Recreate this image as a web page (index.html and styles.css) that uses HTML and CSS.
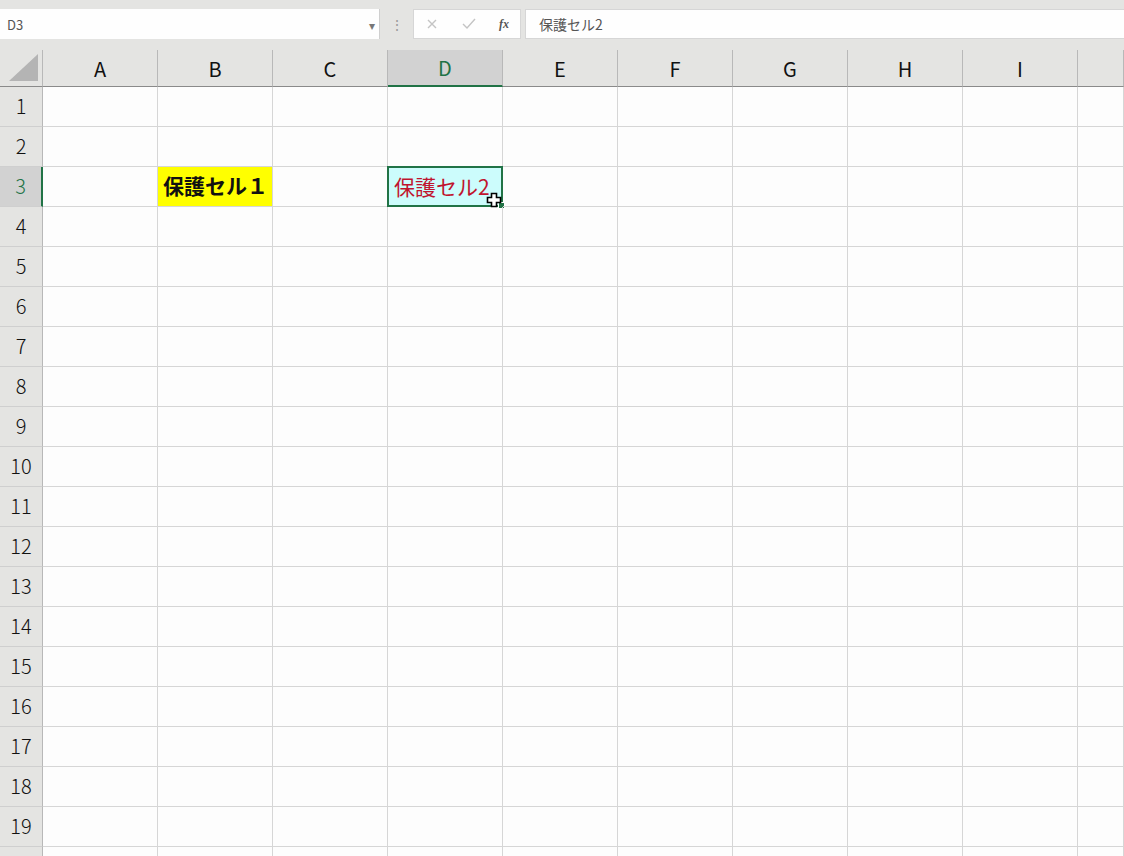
FILE: index.html
```html
<!DOCTYPE html>
<html lang="ja">
<head>
  <meta charset="UTF-8">
  <meta name="viewport" content="width=device-width, initial-scale=1.0">
  <title>Book1 - Sheet1</title>
  <link rel="stylesheet" href="styles.css">
</head>
<body>
  <div class="formula-bar">
    <div class="name-box">
      <span>D3</span>
      <span class="drop">&#9662;</span>
    </div>
    <div class="grip">&#8942;</div>
    <div class="fx-buttons">
      <svg class="fx-btn" width="14" height="14" viewBox="0 0 14 14"><path d="M3 3l8 8M11 3l-8 8" stroke="#c4c4c4" stroke-width="1.4" fill="none"/></svg>
      <svg class="fx-btn" width="16" height="14" viewBox="0 0 16 14"><path d="M2 7l4 4 8-9" stroke="#c4c4c4" stroke-width="1.4" fill="none"/></svg>
      <span class="fx">fx</span>
    </div>
    <div class="formula-input">保護セル2</div>
  </div>

  <div class="sheet" id="sheet"></div>

  <script>
    // build the grid: corner, column headers, then the rows
    const cols = ["A", "B", "C", "D", "E", "F", "G", "H", "I", ""];
    const sheet = document.getElementById("sheet");

    function cell(cls, text) {
      const el = document.createElement("div");
      el.className = cls;
      if (text) el.textContent = text;
      sheet.appendChild(el);
      return el;
    }

    const corner = cell("corner");
    corner.innerHTML = '<svg width="30" height="28" viewBox="0 0 30 28"><path d="M29 0V27H0Z" fill="#b4b4b4"/></svg>';
    cols.forEach(c => cell("col-head" + (c === "D" ? " active" : ""), c));

    for (let r = 1; r <= 20; r++) {
      // last row only peeks in under the window edge, its number stays hidden
      cell("row-head" + (r === 3 ? " active" : ""), r < 20 ? String(r) : "");
      cols.forEach(c => {
        const el = cell("cell");
        if (r === 3 && c === "B") {
          el.classList.add("locked");
          el.textContent = "保護セル１";
        }
        if (r === 3 && c === "D") {
          el.classList.add("selected");
          el.innerHTML = '保護セル2<span class="handle"></span>' +
            '<svg class="pointer" width="16" height="16" viewBox="0 0 16 16"><path d="M5.5 1.5h5v4h4v5h-4v4h-5v-4h-4v-5h4z" fill="#fff" stroke="#000" stroke-width="1.6"/></svg>';
        }
      });
    }
  </script>
</body>
</html>
```

FILE: styles.css
```css
body {
  margin: 0;
  background: #fdfdfd;
  font-family: "Noto Sans CJK JP", "Noto Sans", sans-serif;
  color: #222;
  overflow: hidden;
  width: 1124px;
  height: 856px;
}

/* top bar with name box and formula input */
.formula-bar {
  display: flex;
  align-items: flex-start;
  height: 50px;
  padding-top: 9px;
  box-sizing: border-box;
  background: #e4e4e2;
}
.name-box {
  width: 380px;
  height: 30px;
  background: #fefefe;
  border-right: 1px solid #cfcfcf;
  box-sizing: border-box;
  display: flex;
  align-items: center;
  justify-content: space-between;
  padding: 0 4px 0 7px;
  font-size: 13px;
  color: #555;
}
.name-box .drop {
  font-size: 12px;
  color: #777;
}
.grip {
  width: 33px;
  line-height: 30px;
  text-align: center;
  color: #9a9a9a;
  font-size: 14px;
}
.fx-buttons {
  width: 108px;
  height: 30px;
  background: #fefefe;
  border: 1px solid #d6d6d6;
  box-sizing: border-box;
  display: flex;
  align-items: center;
  justify-content: space-between;
  padding: 0 11px 0 11px;
}
.fx {
  font-family: "Liberation Serif", serif;
  font-style: italic;
  font-weight: bold;
  font-size: 12px;
  color: #555;
}
.formula-input {
  flex: 1;
  height: 30px;
  margin-left: 4px;
  background: #fefefe;
  border: 1px solid #d6d6d6;
  border-right: none;
  box-sizing: border-box;
  padding-left: 13px;
  line-height: 28px;
  font-size: 14px;
  color: #555;
}

/* spreadsheet grid */
.sheet {
  display: grid;
  grid-template-columns: 43px repeat(9, 115px) 46px;
  grid-template-rows: 37px;
  grid-auto-rows: 40px;
}
.corner {
  background: #e4e4e2;
  border-right: 1px solid #b8b8b8;
  border-bottom: 1px solid #8a8a8a;
  display: flex;
  align-items: flex-end;
  justify-content: flex-end;
  padding: 0 3px 4px 0;
}
.col-head {
  background: #e4e4e2;
  border-bottom: 1px solid #8a8a8a;
  border-right: 1px solid #b8b8b8;
  display: flex;
  align-items: center;
  justify-content: center;
  font-size: 20px;
  color: #111;
}
.col-head.active {
  background: #d2d2d2;
  color: #217346;
  border-bottom: 2px solid #217346;
}
.row-head {
  background: #e4e4e2;
  border-right: 1px solid #b8b8b8;
  border-bottom: 1px solid #cfcfcf;
  display: flex;
  align-items: center;
  justify-content: center;
  font-size: 20px;
  font-weight: 300;
  color: #111;
  padding-bottom: 2px;
}
.row-head.active {
  background: #d2d2d2;
  color: #217346;
  border-right: 2px solid #217346;
}
.cell {
  border-right: 1px solid #d6d6d6;
  border-bottom: 1px solid #d6d6d6;
  font-size: 21px;
  line-height: 37px;
  white-space: nowrap;
  position: relative;
}
.cell.locked {
  background: #ffff00;
  font-weight: bold;
  padding-left: 5px;
  color: #111;
}
.cell.selected {
  background: #ccfcfc;
  color: #c0142e;
  border: 2px solid #217346;
  margin: -1px 0 0 -1px;
  padding-left: 5px;
  line-height: 36px;
}
.handle {
  position: absolute;
  right: -4px;
  bottom: -4px;
  width: 5px;
  height: 5px;
  background: #217346;
  border: 1px solid #fff;
}
.pointer {
  position: absolute;
  left: 97px;
  top: 24px;
}
```
